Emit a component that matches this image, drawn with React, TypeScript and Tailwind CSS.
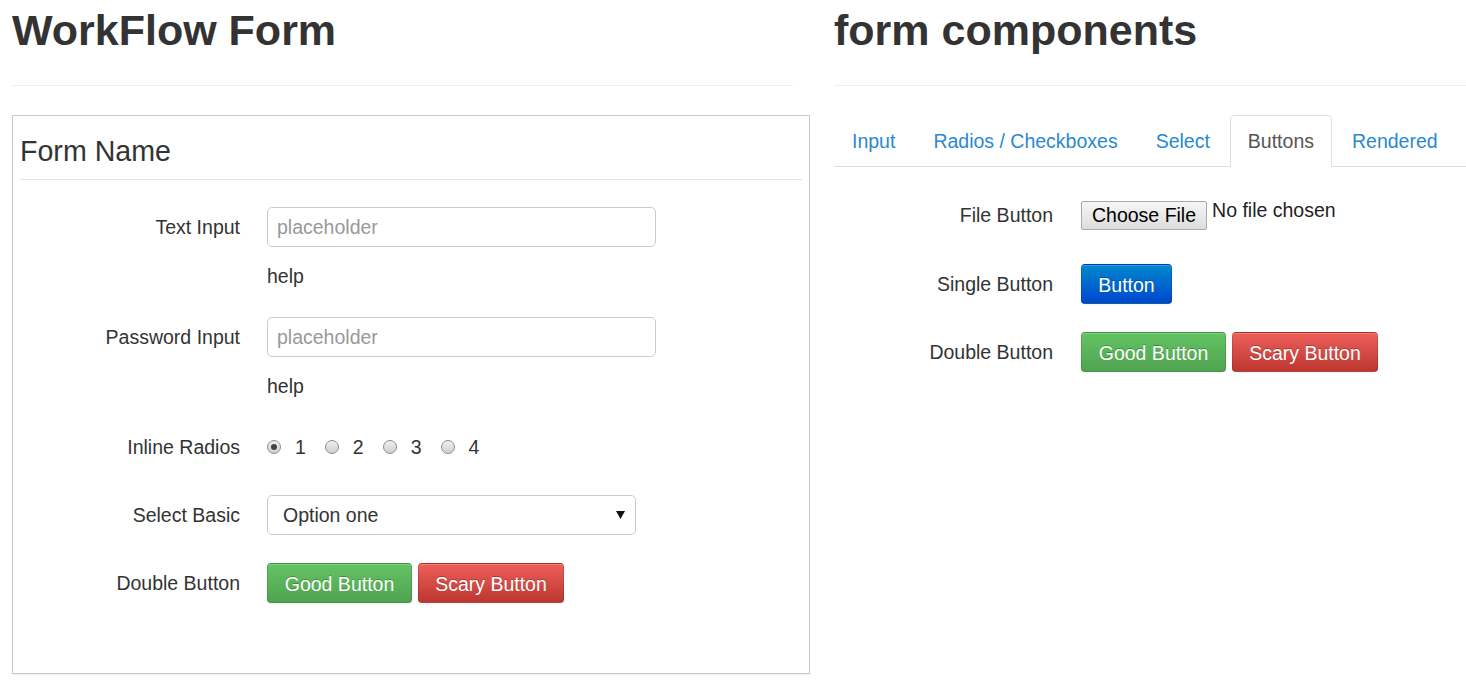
import React from "react";

const btnBase =
  "h-[40px] rounded-[4px] border border-[rgba(0,0,0,0.12)] border-b-[rgba(0,0,0,0.25)] text-white text-center leading-[38px] pt-[1px] [text-shadow:0_-1px_0_rgba(0,0,0,0.25)] shadow-[inset_0_1px_0_rgba(255,255,255,0.2),0_1px_2px_rgba(0,0,0,0.05)]";

const GoodButton = () => (
  <button className={`${btnBase} w-[145px] bg-linear-to-b from-[#62c462] to-[#51a351]`}>
    Good Button
  </button>
);

const ScaryButton = () => (
  <button className={`${btnBase} w-[146px] bg-linear-to-b from-[#ee5f5b] to-[#bd362f]`}>
    Scary Button
  </button>
);

const Radio = ({ checked, label }: { checked?: boolean; label: string }) => (
  <div className="flex items-center gap-[14px] mr-[19px]">
    <div className="shrink-0 w-[14px] h-[14px] rounded-full border border-[#8e8e8e] bg-linear-to-b from-[#efefef] to-[#cfcfcf] flex items-center justify-center">
      {checked && <div className="w-[6px] h-[6px] rounded-full bg-[#444]" />}
    </div>
    <span className="pt-[2px]">{label}</span>
  </div>
);

const Row = ({
  label,
  width,
  gap,
  className = "",
  children,
}: {
  label: string;
  width: string;
  gap: string;
  className?: string;
  children: React.ReactNode;
}) => (
  <div className={`flex items-center h-[40px] ${className}`}>
    <div className={`${width} ${gap} shrink-0 text-right pt-[2px]`}>{label}</div>
    {children}
  </div>
);

const tabs = ["Input", "Radios / Checkboxes", "Select", "Buttons", "Rendered"];

export default function App() {
  return (
    <div className="min-h-screen bg-white text-[#333] text-[19.5px] font-['Liberation_Sans',Arial,sans-serif] overflow-hidden">
      <div className="flex pl-[12px]">
        {/* Left side - form preview */}
        <div className="w-[781px] shrink-0">
          <h1 className="mt-[7px] text-[43px] leading-[47px] font-bold">WorkFlow Form</h1>
          <div className="mt-[31px] border-t border-[#eee]" />

          <div className="mt-[29px] w-[798px] h-[559px] border border-[#c8c8c8] px-[7px] shadow-[0_1px_1px_rgba(0,0,0,0.06)]">
            <div className="mt-[14px] text-[28.6px] leading-[40px] pt-[1px] pb-[8px] border-b border-[#e5e5e5]">
              Form Name
            </div>

            <Row label="Text Input" width="w-[220px]" gap="mr-[27px]" className="mt-[27px]">
              <input
                placeholder="placeholder"
                className="w-[389px] h-[40px] border border-[#ccc] rounded-[5px] px-[9px] pt-[1px] outline-none placeholder:text-[#999]"
              />
            </Row>
            <div className="ml-[247px] mt-[17px] leading-[24px]">help</div>

            <Row label="Password Input" width="w-[220px]" gap="mr-[27px]" className="mt-[29px]">
              <input
                type="password"
                placeholder="placeholder"
                className="w-[389px] h-[40px] border border-[#ccc] rounded-[5px] px-[9px] pt-[1px] outline-none placeholder:text-[#999]"
              />
            </Row>
            <div className="ml-[247px] mt-[17px] leading-[24px]">help</div>

            <Row label="Inline Radios" width="w-[220px]" gap="mr-[27px]" className="mt-[29px]">
              <Radio checked label="1" />
              <Radio label="2" />
              <Radio label="3" />
              <Radio label="4" />
            </Row>

            <Row label="Select Basic" width="w-[220px]" gap="mr-[27px]" className="mt-[28px]">
              <div className="w-[369px] h-[40px] border border-[#ccc] rounded-[5px] pl-[15px] pr-[10px] flex items-center justify-between">
                <span className="pt-[2px]">Option one</span>
                <svg width="9" height="8" viewBox="0 0 9 8">
                  <path d="M0 0 H9 L4.5 8 Z" fill="#111" />
                </svg>
              </div>
            </Row>

            <Row label="Double Button" width="w-[220px]" gap="mr-[27px]" className="mt-[28px]">
              <div className="flex gap-[6px]">
                <GoodButton />
                <ScaryButton />
              </div>
            </Row>
          </div>
        </div>

        {/* Right side - component palette */}
        <div className="ml-[41px] flex-1">
          <h1 className="mt-[7px] text-[43px] leading-[47px] font-bold">form components</h1>
          <div className="mt-[31px] border-t border-[#eee]" />

          <div className="mt-[29px] flex border-b border-[#ddd]">
            {tabs.map((t) =>
              t === "Buttons" ? (
                <div
                  key={t}
                  className="mr-[2px] -mb-px px-[17px] pt-[12px] pb-[10px] leading-[27px] border border-[#ddd] border-b-white rounded-t-[5px] bg-white text-[#555]"
                >
                  {t}
                </div>
              ) : (
                <div key={t} className="mr-[2px] px-[18px] pt-[13px] pb-[11px] leading-[27px] text-[#2a89cf]">
                  {t}
                </div>
              )
            )}
          </div>

          <Row label="File Button" width="w-[219px]" gap="mr-[28px]" className="mt-[28px]">
            <div className="flex items-start">
              <button className="h-[29px] px-[10px] border border-[#a9a9a9] rounded-[2px] bg-linear-to-b from-[#f6f6f6] to-[#dddddd] text-black leading-[27px]">
                Choose File
              </button>
              <span className="ml-[5px] -mt-[3px] leading-[24px] text-[#222]">No file chosen</span>
            </div>
          </Row>

          <Row label="Single Button" width="w-[219px]" gap="mr-[28px]" className="mt-[29px]">
            <button className={`${btnBase} w-[91px] bg-linear-to-b from-[#0088cc] to-[#0044cc]`}>Button</button>
          </Row>

          <Row label="Double Button" width="w-[219px]" gap="mr-[28px]" className="mt-[28px]">
            <div className="flex gap-[6px]">
              <GoodButton />
              <ScaryButton />
            </div>
          </Row>
        </div>
      </div>
    </div>
  );
}
